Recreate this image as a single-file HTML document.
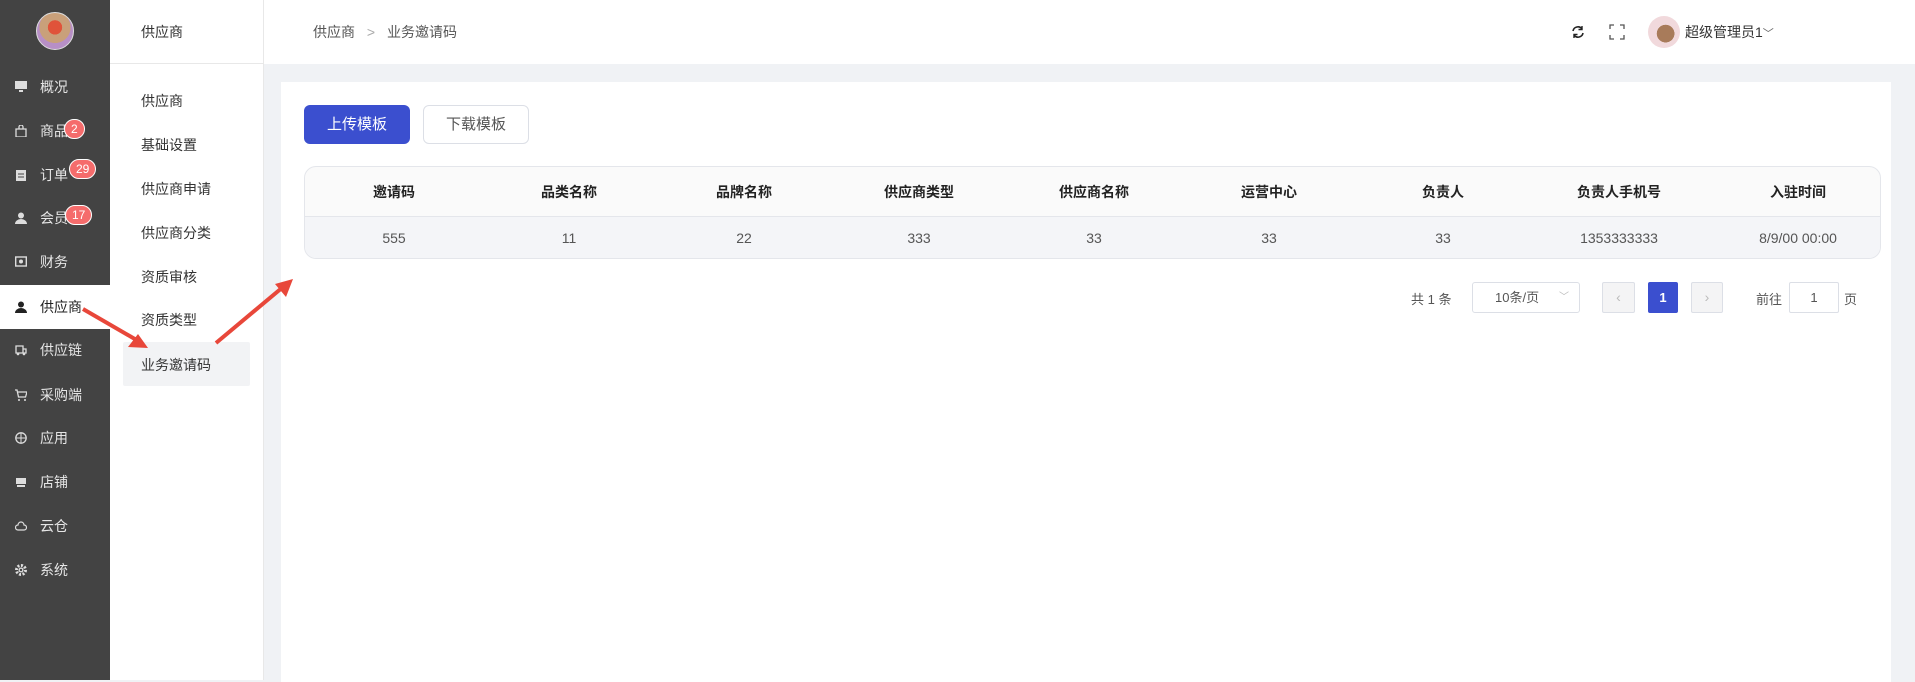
<!DOCTYPE html>
<html><head><meta charset="utf-8"><style>
*{margin:0;padding:0;box-sizing:border-box}
body{width:1915px;height:680px;overflow:hidden;background:#f0f2f5;font-family:"Liberation Sans","Noto Sans CJK SC",sans-serif;font-size:14px;color:#333;position:relative}
.abs{position:absolute;white-space:nowrap}
#side{left:0;top:0;width:110px;height:680px;background:#434343}
.mi{position:absolute;left:0;width:110px;height:44px;color:#e6e6e6;font-size:14px;line-height:44px}
.mi .ic{position:absolute;left:15px;top:16px;width:12px;height:12px}
.mi span.t{position:absolute;left:40px}
.badge{position:absolute;background:#f56c6c;color:#fff;border:1px solid #fff;border-radius:10px;height:20px;line-height:18px;font-size:12px;padding:0 6px}
#sub{left:110px;top:0;width:154px;height:680px;background:#fff;border-right:1px solid #e8e8e8}
.si{position:absolute;left:31px;font-size:14px;color:#333;white-space:nowrap}
#top{left:264px;top:0;width:1651px;height:64px;background:#fff}
#card{left:281px;top:82px;width:1610px;height:600px;background:#fff}
.th{position:absolute;top:0;height:50px;line-height:50px;font-weight:bold;color:#222;font-size:14px;transform:translateX(-50%);white-space:nowrap}
.td{position:absolute;top:50px;height:43px;line-height:43px;color:#555;font-size:14px;transform:translateX(-50%);white-space:nowrap}
.pg{position:absolute;height:31px;border:1px solid #dcdfe6;border-radius:2px;background:#f4f4f5;color:#bbb;text-align:center;line-height:29px}
</style></head><body>
<div id="side" class="abs">
  <div class="abs" style="left:36px;top:12px;width:38px;height:38px;border-radius:50%;background:radial-gradient(circle at 50% 40%,#e0533a 0 25%,#c9a07a 26% 55%,#b78fc6 56%);border:1px solid #ddd"></div>
  <div class="mi" style="top:65px"><svg class="ic" viewBox="0 0 12 12"><rect x="0" y="0" width="12" height="8" fill="#ddd"/><rect x="4" y="9" width="4" height="2" fill="#ddd"/></svg><span class="t">概况</span></div>
  <div class="mi" style="top:109px"><svg class="ic" viewBox="0 0 12 12"><path d="M1 4h10v8H1zM4 4V2a2 2 0 0 1 4 0v2" fill="none" stroke="#ddd" stroke-width="1.3"/></svg><span class="t">商品</span><span class="badge" style="left:64px;top:10px">2</span></div>
  <div class="mi" style="top:153px"><svg class="ic" viewBox="0 0 12 12"><rect x="1" y="1" width="10" height="11" fill="#ddd"/><path d="M3 5h6M3 8h6" stroke="#434343"/></svg><span class="t">订单</span><span class="badge" style="left:69px;top:6px">29</span></div>
  <div class="mi" style="top:196px"><svg class="ic" viewBox="0 0 12 12"><circle cx="6" cy="3.5" r="3" fill="#ddd"/><path d="M0 12a6 5 0 0 1 12 0z" fill="#ddd"/></svg><span class="t">会员</span><span class="badge" style="left:65px;top:9px">17</span></div>
  <div class="mi" style="top:240px"><svg class="ic" viewBox="0 0 12 12"><rect x="0.7" y="1" width="10.6" height="9" fill="none" stroke="#ddd" stroke-width="1.4"/><circle cx="6" cy="5.5" r="2" fill="#ddd"/></svg><span class="t">财务</span></div>
  <div class="mi" style="top:285px;background:#fff;color:#222"><svg class="ic" viewBox="0 0 12 12"><circle cx="6" cy="3.5" r="3" fill="#222"/><path d="M0 12a6 5 0 0 1 12 0z" fill="#222"/></svg><span class="t">供应商</span></div>
  <div class="mi" style="top:328px"><svg class="ic" viewBox="0 0 12 12"><path d="M1 2h7v7H1zM8 5h3v4H8" fill="none" stroke="#ddd" stroke-width="1.3"/><circle cx="3" cy="10" r="1.3" fill="#ddd"/><circle cx="9" cy="10" r="1.3" fill="#ddd"/></svg><span class="t">供应链</span></div>
  <div class="mi" style="top:373px"><svg class="ic" viewBox="0 0 12 12"><path d="M0 1h2l1.5 7h7L12 3H3" fill="none" stroke="#ddd" stroke-width="1.3"/><circle cx="4" cy="11" r="1" fill="#ddd"/><circle cx="10" cy="11" r="1" fill="#ddd"/></svg><span class="t">采购端</span></div>
  <div class="mi" style="top:416px"><svg class="ic" viewBox="0 0 12 12"><circle cx="6" cy="6" r="5.2" fill="none" stroke="#ddd" stroke-width="1.3"/><path d="M6 1v10M1 6h10" stroke="#ddd"/></svg><span class="t">应用</span></div>
  <div class="mi" style="top:460px"><svg class="ic" viewBox="0 0 12 12"><rect x="1" y="2" width="10" height="6" fill="#ddd"/><rect x="2" y="9" width="8" height="2" fill="#ddd"/></svg><span class="t">店铺</span></div>
  <div class="mi" style="top:504px"><svg class="ic" viewBox="0 0 12 12"><path d="M3 10a2.5 2.5 0 0 1 0-5 3 3 0 0 1 6 0 2.5 2.5 0 0 1 0 5z" fill="none" stroke="#ddd" stroke-width="1.2"/></svg><span class="t">云仓</span></div>
  <div class="mi" style="top:548px"><svg class="ic" viewBox="0 0 12 12"><circle cx="6" cy="6" r="4.5" fill="none" stroke="#ddd" stroke-width="3" stroke-dasharray="2 1.5"/><circle cx="6" cy="6" r="2.5" fill="#ddd"/><circle cx="6" cy="6" r="1.2" fill="#434343"/></svg><span class="t">系统</span></div>
</div>
<div id="sub" class="abs">
  <div class="si" style="top:22px">供应商</div>
  <div class="abs" style="left:0;top:63px;width:154px;height:1px;background:#e8e8e8"></div>
  <div class="si" style="top:91px">供应商</div>
  <div class="si" style="top:135px">基础设置</div>
  <div class="si" style="top:179px">供应商申请</div>
  <div class="si" style="top:223px">供应商分类</div>
  <div class="si" style="top:267px">资质审核</div>
  <div class="si" style="top:310px">资质类型</div>
  <div class="abs" style="left:13px;top:342px;width:127px;height:44px;background:#f2f3f5;border-radius:2px"></div>
  <div class="si" style="top:355px">业务邀请码</div>
</div>
<div id="top" class="abs">
  <div class="abs" style="left:49px;top:22px;color:#555">供应商 <span style="color:#aaa;margin:0 8px">&gt;</span> 业务邀请码</div>
  <svg class="abs" style="left:1307px;top:25px" width="14" height="14" viewBox="0 0 14 14"><path d="M2 6a5 5 0 0 1 9-2M12 8a5 5 0 0 1-9 2" fill="none" stroke="#222" stroke-width="1.6"/><path d="M11 1v3.5H7.5M3 13V9.5h3.5" fill="none" stroke="#222" stroke-width="1.4"/></svg>
  <svg class="abs" style="left:1345px;top:24px" width="16" height="16" viewBox="0 0 16 16"><path d="M1 5V1h4M11 1h4v4M15 11v4h-4M5 15H1v-4" fill="none" stroke="#555" stroke-width="1.3"/></svg>
  <div class="abs" style="left:1384px;top:16px;width:32px;height:32px;border-radius:50%;background:radial-gradient(circle at 55% 55%,#a87b5a 0 35%,#f1d9dc 36%)"></div>
  <div class="abs" style="left:1421px;top:22px;color:#333">超级管理员1<span style="font-size:11px;color:#666">﹀</span></div>
</div>
<div id="card" class="abs">
  <div class="abs" style="left:23px;top:23px;width:106px;height:39px;background:#3b4fcf;border-radius:6px;color:#fff;text-align:center;line-height:39px;font-size:15px">上传模板</div>
  <div class="abs" style="left:142px;top:23px;width:106px;height:39px;border:1px solid #dcdfe6;border-radius:6px;color:#555;text-align:center;line-height:37px;font-size:15px">下载模板</div>
  <div class="abs" style="left:23px;top:84px;width:1577px;height:93px;border:1px solid #e4e6eb;border-radius:12px;overflow:hidden;background:#fafafa">
    <div class="abs" style="left:0;top:49px;width:100%;height:44px;background:#f4f5f8;border-top:1px solid #e4e6eb"></div>
    <div class="th" style="left:89px">邀请码</div><div class="td" style="left:89px">555</div>
    <div class="th" style="left:264px">品类名称</div><div class="td" style="left:264px">11</div>
    <div class="th" style="left:439px">品牌名称</div><div class="td" style="left:439px">22</div>
    <div class="th" style="left:614px">供应商类型</div><div class="td" style="left:614px">333</div>
    <div class="th" style="left:789px">供应商名称</div><div class="td" style="left:789px">33</div>
    <div class="th" style="left:964px">运营中心</div><div class="td" style="left:964px">33</div>
    <div class="th" style="left:1138px">负责人</div><div class="td" style="left:1138px">33</div>
    <div class="th" style="left:1314px">负责人手机号</div><div class="td" style="left:1314px">1353333333</div>
    <div class="th" style="left:1493px">入驻时间</div><div class="td" style="left:1493px">8/9/00 00:00</div>
  </div>
  <div class="abs" style="left:1130px;top:207px;color:#555;font-size:13px">共 1 条</div>
  <div class="abs" style="left:1191px;top:200px;width:108px;height:31px;border:1px solid #dcdfe6;border-radius:3px;color:#555;font-size:13px;line-height:29px;padding-left:22px">10条/页<span style="position:absolute;right:10px;color:#bbb;font-size:10px">﹀</span></div>
  <div class="pg" style="left:1321px;top:200px;width:33px">‹</div>
  <div class="pg" style="left:1367px;top:200px;width:30px;background:#3b4fcf;border-color:#3b4fcf;color:#fff;font-weight:bold;font-size:13px">1</div>
  <div class="pg" style="left:1410px;top:200px;width:32px">›</div>
  <div class="abs" style="left:1475px;top:207px;color:#555;font-size:13px">前往</div>
  <div class="abs" style="left:1508px;top:200px;width:50px;height:31px;border:1px solid #dcdfe6;border-radius:2px;text-align:center;line-height:29px;color:#555;font-size:13px">1</div>
  <div class="abs" style="left:1563px;top:207px;color:#555;font-size:13px">页</div>
</div>
<svg class="abs" style="left:0;top:0" width="400" height="400">
  <path d="M83 309 L140 342" stroke="#e8473a" stroke-width="4"/>
  <path d="M148 348 L128 347 L138 334 Z" fill="#e8473a"/>
  <path d="M216 343 L283 287" stroke="#e8473a" stroke-width="4"/>
  <path d="M293 279 L286 297 L275 284 Z" fill="#e8473a"/>
</svg>
</body></html>
